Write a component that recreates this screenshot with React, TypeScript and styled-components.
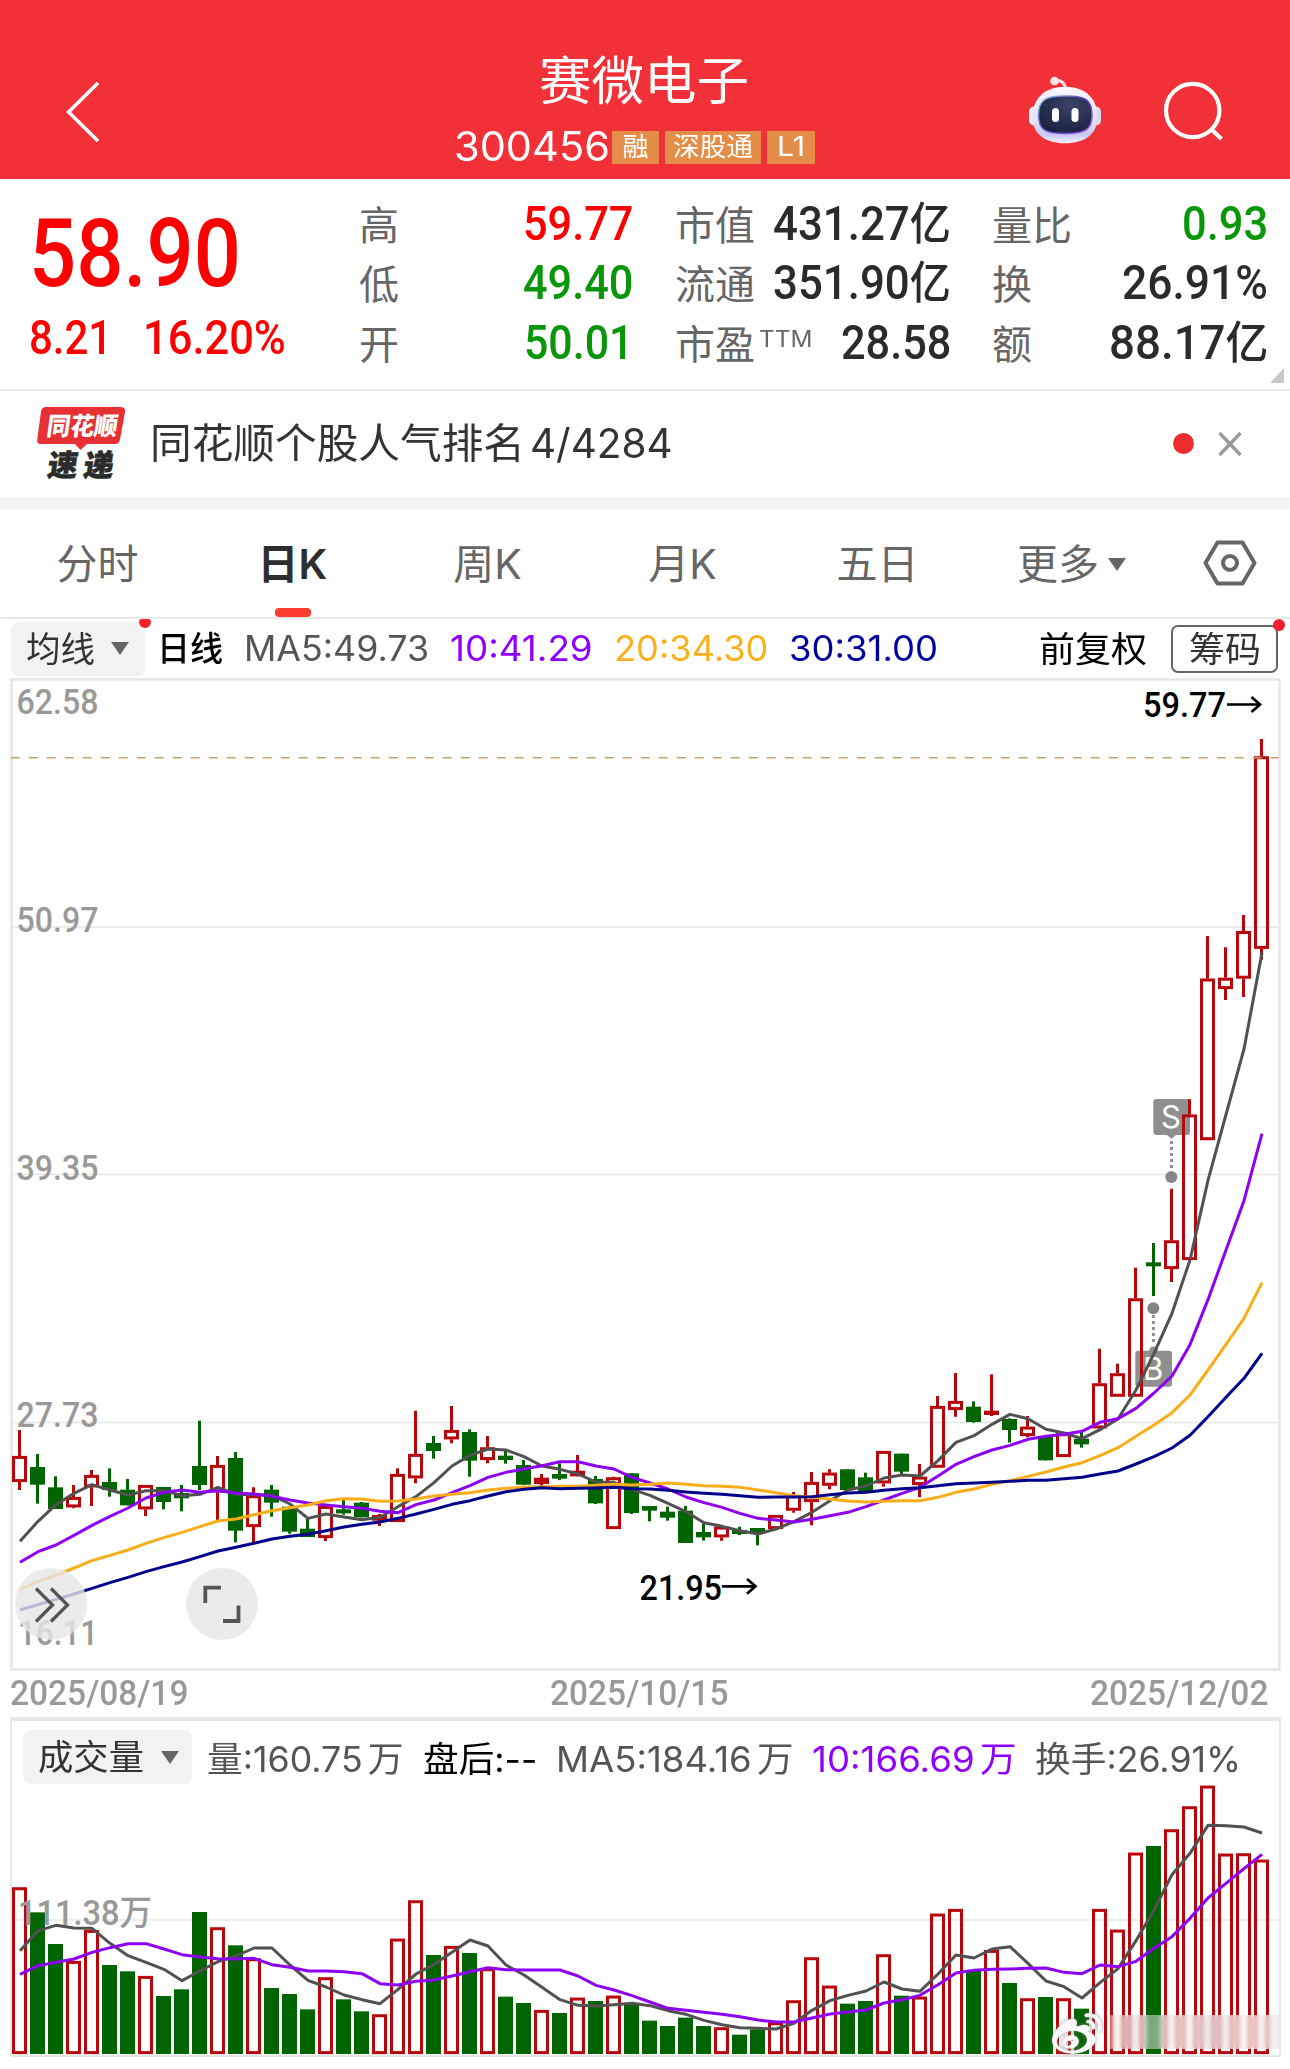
import React, { useLayoutEffect, useRef, useState } from "react";
import styled, { createGlobalStyle } from "styled-components";
import { FaWeibo } from "react-icons/fa";

const UI = `Inter, "Noto Sans CJK SC", sans-serif`;
const DIN = `Roboto, "Noto Sans CJK SC", sans-serif`;

const Global = createGlobalStyle`
  * { box-sizing: border-box; }
  body { margin: 0; background: #fff; font-family: ${UI}; }
`;

/* ---------- text that fills a given width ---------- */

const FitBox = styled.span<{ $w: number; $din?: boolean; $size: number; $color?: string; $weight?: number; $dy?: number }>`
  display: block;
  flex: none;
  width: ${(p) => p.$w}px;
  font-family: ${(p) => (p.$din ? DIN : UI)};
  font-size: ${(p) => p.$size}px;
  font-weight: ${(p) => p.$weight ?? 400};
  color: ${(p) => p.$color ?? "inherit"};
  line-height: 1.2;
  margin-top: ${(p) => p.$dy ?? 0}px;
  white-space: nowrap;
`;
const FitInner = styled.span`
  display: inline-block;
  transform-origin: 0 50%;
`;

type FitProps = {
  w: number;
  size: number;
  din?: boolean;
  color?: string;
  weight?: number;
  dy?: number;
  children: React.ReactNode;
};

function Fit({ w, size, din, color, weight, dy, children }: FitProps) {
  const ref = useRef<HTMLSpanElement>(null);
  const [scale, setScale] = useState(1);
  useLayoutEffect(() => {
    if (ref.current) setScale(w / ref.current.offsetWidth);
  }, [w, size, children]);
  return (
    <FitBox $w={w} $size={size} $din={din} $color={color} $weight={weight} $dy={dy}>
      <FitInner ref={ref} style={{ transform: `scaleX(${scale})` }}>
        {children}
      </FitInner>
    </FitBox>
  );
}

/* ---------- page ---------- */

const Page = styled.main`
  width: 1290px;
  height: 2069px;
  overflow: hidden;
  display: flex;
  flex-direction: column;
  background: #fff;
`;

/* ---------- header ---------- */

const Header = styled.header`
  flex: none;
  height: 179px;
  display: grid;
  grid-template-columns: 455px 1fr 455px;
  background: #f23037;
  color: #fff;
`;
const BackSlot = styled.div`
  padding: 80px 0 0 62px;
`;
const Titles = styled.div`
  display: flex;
  flex-direction: column;
  padding-top: 51px;
`;
const TitleRow = styled.div`
  display: flex;
  justify-content: center;
  height: 62px;
  align-items: center;
  margin-right: 3px;
`;
const CodeRow = styled.div`
  display: flex;
  align-items: center;
  height: 36px;
  margin-top: 16px;
  margin-left: -1px;
`;
const Tag = styled.span<{ $w: number }>`
  flex: none;
  width: ${(p) => p.$w}px;
  height: 33px;
  margin-left: 6px;
  background: #e48d48;
  display: flex;
  align-items: center;
  justify-content: center;
  &:first-of-type { margin-left: 0; }
`;
const TagRow = styled.div`
  display: flex;
  margin-left: 2px;
`;
const HeaderActions = styled.div`
  display: flex;
  padding: 72px 0 0 190px;
  gap: 56px;
`;

function Robot() {
  return (
    <svg width="80" height="76" viewBox="1025 72 80 76">
      <defs>
        <linearGradient id="shell" x1="0" y1="0" x2="0" y2="1">
          <stop offset="0" stopColor="#fdf8fb" />
          <stop offset="0.6" stopColor="#e4e0f4" />
          <stop offset="0.85" stopColor="#c9c8f2" />
          <stop offset="1" stopColor="#f4f2fb" />
        </linearGradient>
        <linearGradient id="rim" x1="0" y1="0" x2="1" y2="1">
          <stop offset="0" stopColor="#8fc5e8" />
          <stop offset="0.5" stopColor="#5a3fc0" />
          <stop offset="1" stopColor="#a25bf0" />
        </linearGradient>
        <radialGradient id="visor" cx="0.6" cy="0.25" r="0.8">
          <stop offset="0" stopColor="#3b4468" />
          <stop offset="1" stopColor="#18203f" />
        </radialGradient>
      </defs>
      <path d="M1056 80.500Q1064.500 80 1065.500 89" fill="none" stroke="#f8dfe4" strokeWidth="3" />
      <circle cx="1054.500" cy="81" r="4.300" fill="#fbe6ea" />
      <rect x="1029" y="106.500" width="12" height="19" rx="5" fill="#efeaf6" />
      <rect x="1089" y="106.500" width="12" height="19" rx="5" fill="#dcd6f2" />
      <path d="M1065 86.700C1086 86.700 1097.500 99 1097.500 117C1097.500 134 1085 143.300 1065 143.300C1045 143.300 1032.500 134 1032.500 117C1032.500 99 1044 86.700 1065 86.700Z" fill="url(#shell)" />
      <path d="M1065.500 96C1084 96 1092 98.500 1092 115C1092 130 1085 133.500 1065.500 133.500C1046 133.500 1038.500 130 1038.500 115C1038.500 98.500 1047 96 1065.500 96Z" fill="url(#visor)" stroke="url(#rim)" strokeWidth="1.500" />
      <rect x="1052" y="108" width="7" height="14" rx="3.500" fill="#fff" />
      <rect x="1071.500" y="108" width="7" height="14" rx="3.500" fill="#fff" />
    </svg>
  );
}

/* ---------- quote ---------- */

const Quote = styled.section`
  position: relative;
  flex: none;
  height: 212px;
  padding: 15px 0 0 29px;
  display: grid;
  grid-template-columns: 330px 275px 277px 277px;
  column-gap: 0;
  border-bottom: 2px solid #ebebeb;
`;
const PriceBlock = styled.div`
  display: flex;
  flex-direction: column;
  color: #ff0000;
`;
const PriceRow = styled.div`
  height: 118px;
  padding-top: 2px;
  display: flex;
  align-items: center;
`;
const ChangeRow = styled.div`
  height: 52px;
  display: flex;
  align-items: center;
  gap: 31px;
`;
const Column = styled.div<{ $gap?: number }>`
  margin-left: ${(p) => p.$gap ?? 0}px;
  width: ${(p) => (p.$gap ? 276 : 274)}px;
`;
const StatRow = styled.div`
  height: 59.500px;
  display: flex;
  align-items: center;
  justify-content: space-between;
`;
const Label = styled.span`
  display: flex;
  color: #666;
  font-size: 40px;
  line-height: 50px;
  padding-top: 4px;
`;
const Yi = styled.span`
  font-size: 45px;
`;
const SupSlot = styled.span`
  display: flex;
  padding: 5px 0 0 4px;
`;
const Corner = styled.i`
  position: absolute;
  right: 6px;
  bottom: 6px;
  border-left: 14px solid transparent;
  border-bottom: 15px solid #c8c8c8;
`;

type Stat = { label: string; sup?: string; value: string; yi?: boolean; w: number; color: string };
const RED = "#ff0000";
const GREEN = "#0a960a";
const INK = "#2b2b2b";
const stats: Stat[][] = [
  [
    { label: "高", value: "59.77", w: 110, color: RED },
    { label: "低", value: "49.40", w: 110, color: GREEN },
    { label: "开", value: "50.01", w: 109, color: GREEN },
  ],
  [
    { label: "市值", value: "431.27", yi: true, w: 178, color: INK },
    { label: "流通", value: "351.90", yi: true, w: 178, color: INK },
    { label: "市盈", sup: "TTM", value: "28.58", w: 110, color: INK },
  ],
  [
    { label: "量比", value: "0.93", w: 86, color: GREEN },
    { label: "换", value: "26.91%", w: 146, color: INK },
    { label: "额", value: "88.17", yi: true, w: 159, color: INK },
  ],
];

/* ---------- news ---------- */

const News = styled.section`
  flex: none;
  height: 118px;
  border-bottom: 12px solid #f4f4f4;
  display: flex;
  align-items: center;
`;
const NewsText = styled.div`
  display: flex;
  gap: 5px;
  margin-left: 24px;
  color: #333;
`;
const Dot = styled.i`
  width: 21px;
  height: 21px;
  border-radius: 50%;
  background: #eb2d2d;
  margin: 0 24px 1px auto;
`;
const CloseSlot = styled.span`
  display: flex;
  margin: 0 48px 1px 0;
`;

/* ---------- tabs ---------- */

const Tabs = styled.nav`
  flex: none;
  height: 110px;
  display: flex;
  border-bottom: 2px solid #e8e8e8;
`;
const Tab = styled.div<{ $active?: boolean }>`
  width: 195px;
  display: flex;
  flex-direction: column;
  align-items: center;
  font-size: 41px;
  line-height: 50px;
  padding-top: 30px;
  color: ${(p) => (p.$active ? "#2e2e2e" : "#666")};
  font-weight: ${(p) => (p.$active ? 600 : 400)};
`;
const TabText = styled.span`
  display: flex;
  align-items: center;
  gap: 9px;
  margin-right: 2px;
`;
const Underline = styled.i`
  width: 36px;
  height: 9px;
  border-radius: 4px;
  background: #fb3a30;
  margin-top: 19px;
`;
const Gear = styled.div`
  width: 120px;
  display: flex;
  justify-content: center;
  padding-top: 29px;
`;
const Triangle = styled.i<{ $w: number }>`
  width: 0;
  border: ${(p) => p.$w / 2}px solid transparent;
  border-top: 13px solid #666;
  border-bottom: 0;
`;

/* ---------- indicator rows ---------- */

const MaRow = styled.div`
  flex: none;
  height: 59px;
  display: flex;
  align-items: center;
  padding: 0 12px 0 11px;
`;
const Chip = styled.div<{ $w: number; $end?: number }>`
  position: relative;
  flex: none;
  width: ${(p) => p.$w}px;
  height: 54px;
  border-radius: 8px;
  background: #f2f2f2;
  color: #333;
  display: flex;
  align-items: center;
  justify-content: space-between;
  padding: 0 ${(p) => p.$end ?? 16}px 0 15px;
`;
const Badge = styled.i<{ $top: number; $right: number; $cut?: boolean }>`
  position: absolute;
  top: ${(p) => p.$top}px;
  right: ${(p) => p.$right}px;
  width: 12px;
  height: ${(p) => (p.$cut ? 9 : 12)}px;
  border-radius: ${(p) => (p.$cut ? "3px 3px 6px 6px" : "6px")};
  background: #f5202f;
`;
const MaList = styled.div`
  display: flex;
  align-items: center;
  gap: 21px;
  margin-left: 12px;
`;
const Right = styled.div`
  display: flex;
  align-items: center;
  margin-left: auto;
  gap: 24px;
`;
const ChipsButton = styled.div`
  position: relative;
  width: 107px;
  height: 48px;
  border: 2px solid #666;
  border-radius: 7px;
  display: flex;
  align-items: center;
  justify-content: center;
  color: #333;
`;

/* ---------- charts ---------- */

const PriceArea = styled.section`
  position: relative;
  flex: none;
  height: 993px;
`;
const Plot = styled.svg`
  display: block;
  overflow: visible;
`;
const Floating = styled.button<{ $x: number }>`
  position: absolute;
  left: ${(p) => p.$x}px;
  top: 890px;
  width: 72px;
  height: 72px;
  padding: 0;
  border: 0;
  border-radius: 50%;
  background: rgba(230, 230, 230, 0.8);
`;
const Dates = styled.div`
  flex: none;
  height: 46px;
  padding: 0 22px 0 10px;
  display: flex;
  align-items: center;
  justify-content: space-between;
`;
const VolumePanel = styled.section`
  position: relative;
  flex: none;
  height: 340px;
  margin: 0 9px 0 10px;
  border: 2px solid #e8e8e8;
  border-top-width: 4px;
`;
const VolumeHeader = styled.div`
  height: 63px;
  padding: 9px 0 0 11px;
  display: flex;
  align-items: center;
`;
const VolumeList = styled.div`
  display: flex;
  align-items: center;
  gap: 19px;
  margin-left: 15px;
  padding-top: 3px;
`;
const Unit = styled.span`
  margin-left: 5px;
`;
const Watermark = styled.div`
  position: absolute;
  right: -2px;
  bottom: -3px;
  width: 229px;
  height: 46px;
  color: #fafafa;
  display: flex;
  align-items: center;
  gap: 8px;
  svg { flex: none; filter: drop-shadow(0 0 2px rgba(120, 120, 120, 0.75)); }
`;
const Smudge = styled.div`
  flex: 1;
  height: 34px;
  margin-bottom: 6px;
  background: linear-gradient(90deg, rgba(250,250,250,.3), rgba(225,222,222,.5) 12%, rgba(240,235,235,.6) 45%, rgba(225,220,220,.65) 60%, rgba(250,240,240,.6) 80%, rgba(228,228,228,.6));
  backdrop-filter: blur(2px);
`;

const STEP = 18;
const X0 = 19.3;
const px = (i: number) => X0 + STEP * i;
/* values are thirds of a pixel below a block's top edge */
const from = (top: number, v: number[]) => v.map((n) => top + n / 3);

type Candle = [string, number, number, number, number];
const block = (top: number, rows: Candle[]): Candle[] =>
  rows.map(([c, a, b, d, e]) => [c, top + a / 3, top + b / 3, top + d / 3, top + e / 3]);

const candles: Candle[] = [
  ...block(1400, [
    ["R", 90, 168, 246, 270], ["G", 162, 201, 254, 311], ["G", 229, 262, 327, 327], ["R", 255, 291, 322, 325],
    ["R", 210, 225, 262, 318], ["G", 205, 246, 270, 290], ["G", 237, 269, 316, 316], ["R", 255, 255, 328, 348],
    ["G", 261, 261, 306, 328], ["G", 255, 279, 295, 334], ["G", 62, 198, 255, 270], ["R", 168, 195, 277, 365],
    ["G", 156, 174, 392, 427], ["R", 262, 286, 381, 430], ["G", 255, 269, 308, 350], ["G", 320, 320, 395, 401],
    ["G", 355, 386, 411, 411], ["R", 318, 318, 414, 423], ["G", 300, 328, 340, 344], ["G", 306, 308, 352, 352],
    ["R", 342, 345, 362, 378], ["R", 205, 222, 366, 366], ["R", 32, 162, 235, 250],
  ]),
  ...block(1360, [
    ["G", 228, 249, 273, 296], ["R", 138, 210, 238, 250], ["G", 208, 216, 302, 350], ["R", 228, 262, 300, 310],
    ["G", 270, 287, 300, 311], ["G", 300, 315, 374, 374], ["R", 342, 353, 372, 378], ["G", 310, 342, 356, 360],
    ["R", 285, 332, 349, 349], ["G", 348, 357, 430, 432], ["R", 350, 352, 507, 507], ["G", 340, 340, 459, 462],
    ["G", 438, 438, 452, 484], ["G", 440, 455, 473, 482], ["G", 438, 452, 549, 549], ["G", 490, 516, 532, 542],
    ["R", 495, 500, 532, 542], ["G", 500, 510, 522, 525], ["G", 504, 504, 518, 556], ["R", 465, 465, 507, 507],
    ["R", 396, 405, 452, 458], ["R", 336, 366, 426, 496], ["R", 328, 338, 377, 388], ["G", 328, 328, 390, 390],
  ]),
  ...block(1200, [
    ["G", 818, 832, 875, 875], ["R", 753, 753, 850, 860], ["G", 761, 761, 815, 822], ["R", 792, 830, 855, 892],
    ["R", 588, 618, 803, 803], ["R", 519, 603, 630, 650], ["G", 604, 620, 666, 668], ["R", 523, 632, 645, 648],
    ["G", 655, 657, 690, 728], ["R", 648, 680, 708, 712], ["G", 710, 710, 781, 781], ["R", 700, 700, 771, 771],
    ["G", 695, 716, 733, 743], ["R", 446, 550, 685, 688], ["R", 491, 520, 590, 590], ["R", 203, 295, 590, 590],
    ["G", 129, 187, 199, 288], ["R", -34, 121, 207, 246],
  ]),
  ["R", 1099.2, 1114.5, 1260, 1260],
  ["R", 936.1, 978.6, 1140.1, 1140.1],
  ["R", 947.2, 977.8, 989, 1000],
  ["R", 915, 931.1, 978.6, 997],
  ["R", 739, 756.3, 948.8, 959.5],
];

const ma5 = [
  ...from(1400, [424, 364, 314, 280, 254, 270, 285, 272, 272, 287, 283, 262, 283, 284, 286, 312, 355, 342, 351, 359, 352, 320, 290]),
  ...from(1360, [368, 318, 286, 267, 270, 290, 318, 328, 342, 366, 367, 388, 406, 430, 455, 488, 499, 512, 522, 507, 485, 457, 422, 390]),
  ...from(1200, [858, 834, 825, 828, 782, 727, 707, 673, 643, 656, 688, 699, 716, 689, 657, 570, 460, 340, 180]),
  1180.3, 1114.5, 1049, 952.6,
];
const ma10 = [
  ...from(1400, [487, 455, 435, 406, 376, 349, 324, 294, 277, 270, 277, 272, 279, 282, 289, 300, 309, 315, 320, 325, 334, 338, 314]),
  ...from(1360, [420, 398, 377, 352, 337, 327, 317, 305, 305, 318, 327, 352, 369, 387, 411, 428, 442, 460, 475, 480, 486, 478, 467, 457]),
  ...from(1200, [920, 900, 880, 862, 828, 793, 770, 750, 736, 718, 709, 703, 694, 667, 656, 625, 579, 528, 434, 299, 150, 2, -199]),
];
const ma20 = [
  ...from(1400, [568, 545, 526, 504, 482, 466, 450, 430, 413, 397, 380, 363, 357, 344, 332, 323, 315, 302, 296, 297, 304, 303, 297]),
  ...from(1360, [408, 403, 398, 390, 385, 381, 380, 379, 379, 376, 373, 375, 373, 369, 373, 377, 379, 382, 390, 398, 407, 411, 418, 423]),
  ...from(1200, [906, 904, 902, 902, 892, 877, 867, 853, 842, 829, 816, 801, 788, 767, 743, 709, 675, 638, 585, 510, 433, 355, 248]),
];
const ma30 = [
  ...from(1400, [630, 614, 598, 582, 565, 548, 532, 515, 500, 486, 470, 453, 442, 430, 417, 409, 403, 392, 381, 373, 366, 355, 342]),
  ...from(1360, [448, 433, 422, 408, 395, 388, 383, 386, 385, 384, 382, 386, 387, 391, 396, 400, 403, 407, 412, 411, 411, 410, 404, 399]),
  ...from(1200, [877, 871, 866, 863, 857, 851, 849, 847, 844, 841, 841, 836, 832, 822, 813, 792, 770, 744, 706, 650, 592, 535, 460]),
];
const volumes = from(1700, [
  562, 637, 732, 783, 690, 795, 814, 828, 888, 868, 636, 682, 736, 775, 864, 882, 928, 832, 898, 934, 943, 716, 601, 765, 738,
  759, 805, 890, 909, 930, 939, 893, 903, 887, 910, 962, 978, 953, 978, 982, 1004, 988, 967, 901, 772, 857, 911, 903, 763, 887,
  890, 641, 627, 812, 750, 849, 895, 891, 895, 926, 627, 689, 458, 438, 388, 319, 257, 461, 460, 479,
]);
const vol5 = from(1700, [
  752, 692, 676, 684, 685, 730, 767, 787, 808, 842, 813, 785, 768, 744, 744, 795, 841, 861, 885, 899, 911, 868, 822, 793, 757,
  720, 738, 795, 825, 862, 899, 916, 918, 914, 910, 917, 932, 943, 961, 974, 983, 985, 987, 970, 931, 902, 886, 873, 846, 867,
  874, 822, 765, 774, 747, 740, 790, 843, 860, 894, 848, 806, 722, 630, 524, 460, 376, 377, 381, 399,
]);
const vol10 = from(1700, [
  823, 797, 787, 777, 757, 743, 731, 731, 747, 764, 771, 776, 777, 775, 794, 802, 813, 813, 815, 821, 851, 855, 844, 840, 828,
  815, 803, 809, 810, 810, 810, 828, 856, 870, 887, 906, 925, 931, 937, 943, 950, 960, 966, 966, 954, 942, 936, 930, 909, 899,
  886, 854, 819, 811, 808, 807, 805, 804, 817, 821, 795, 800, 784, 745, 710, 655, 594, 550, 506, 463,
]);

const UP = "#b9060b";
const DOWN = "#006400";

function Line({ data, color }: { data: number[]; color: string }) {
  return (
    <polyline
      points={data.map((y, i) => `${px(i) + 0.7},${y}`).join(" ")}
      fill="none"
      stroke={color}
      strokeWidth={3}
      strokeLinejoin="round"
    />
  );
}

function CandleMark({ c, i }: { c: Candle; i: number }) {
  const [kind, high, top, bottom, low] = c;
  const x = px(i);
  const color = kind === "R" ? UP : DOWN;
  const h = bottom - top;
  if (kind === "R" && h > 7) {
    return (
      <g stroke={color} strokeWidth={3} fill="none">
        <path d={`M${x + 0.2} ${high}V${top}M${x + 0.2} ${bottom}V${low}`} />
        <rect x={x - 5.8} y={top + 1.4} width={12} height={h - 2.8} />
      </g>
    );
  }
  return (
    <g>
      <path d={`M${x + 0.2} ${high}V${low}`} stroke={color} strokeWidth={3} />
      <rect x={x - 7.3} y={top} width={15} height={h} fill={color} />
    </g>
  );
}

const axis = [
  { t: "62.58", x: 16.5, y: 714, w: 82 },
  { t: "50.97", x: 16.5, y: 931.5, w: 82 },
  { t: "39.35", x: 16.5, y: 1179.5, w: 82 },
  { t: "27.73", x: 16.5, y: 1427, w: 82 },
  { t: "16.11", x: 18, y: 1645, w: 80 },
];

function PriceChart() {
  return (
    <PriceArea>
      <Plot width="1290" height="993" viewBox="0 678 1290 993">
        <g stroke="#e6e6e6" fill="none">
          <rect x="11.500" y="679.500" width="1268" height="990" strokeWidth="2.500" />
          <path d="M12 927H1279M12 1174.500H1279M12 1422.500H1279" strokeWidth="1.500" />
        </g>
        <g fill="#999" fontFamily={DIN} fontSize="35" fontWeight="500">
          {axis.map((a) => (
            <text key={a.t} x={a.x} y={a.y} textLength={a.w} lengthAdjust="spacingAndGlyphs">{a.t}</text>
          ))}
        </g>
        <g>
          <rect x="1153.300" y="1099" width="36.700" height="36" rx="3" fill="#8f8f8f" />
          <path d="M1167 1135h9l-4.500 4z" fill="#8f8f8f" />
          <path d="M1171.500 1141V1169" stroke="#8f8f8f" strokeWidth="3" strokeDasharray="3 3" />
          <circle cx="1171.300" cy="1177" r="6" fill="#858585" />
          <text x="1161" y="1128" fontFamily={UI} fontSize="31" fill="#fff">S</text>
          <rect x="1135.300" y="1350.700" width="36.700" height="36" rx="3" fill="#8f8f8f" />
          <path d="M1149 1351a4.500 4.500 0 0 1 9 0z" fill="#8f8f8f" />
          <path d="M1153.400 1315V1344" stroke="#8f8f8f" strokeWidth="3" strokeDasharray="3 3" />
          <circle cx="1153.300" cy="1308.300" r="6" fill="#858585" />
          <text x="1143" y="1380" fontFamily={UI} fontSize="31" fill="#fff">B</text>
        </g>
        {candles.map((c, i) => <CandleMark key={i} c={c} i={i} />)}
        <path d="M10.700 757.800H1279" stroke="#cda071" strokeWidth="1.500" strokeDasharray="9 9" />
        <Line data={ma5} color="#515151" />
        <Line data={ma10} color="#8e00f2" />
        <Line data={ma20} color="#f9ae19" />
        <Line data={ma30} color="#00008b" />
        <g fontFamily={DIN} fontSize="35.500" fontWeight="500" fill="#000">
          <text x="1143" y="717" textLength="83" lengthAdjust="spacingAndGlyphs">59.77</text>
          <text x="639.500" y="1599.500" textLength="82.500" lengthAdjust="spacingAndGlyphs">21.95</text>
        </g>
        <g fill="none" stroke="#000" strokeWidth="2.700">
          <path d="M1227 704.500H1260M1251.500 697L1260 704.500L1251.500 712" />
          <path d="M722 1586.300H755.500M747 1579L755.500 1586.300L747 1593.800" />
        </g>
      </Plot>
      <Floating $x={15} aria-label="展开">
        <svg width="72" height="72" fill="none" stroke="#555" strokeWidth="3.300">
          <path d="M21 20.500L37.500 37L21 53.500M36 20.500L52.500 37L36 53.500" />
        </svg>
      </Floating>
      <Floating $x={186} aria-label="全屏">
        <svg width="72" height="72" fill="none" stroke="#555" strokeWidth="3.800">
          <path d="M19.300 35V19.700H35M37 53H52.500V37.500" />
        </svg>
      </Floating>
    </PriceArea>
  );
}

function VolumeChart() {
  return (
    <Plot width="1267" height="271" viewBox="12 1784 1267 271">
      <path d="M12 1920H1279" stroke="#e8e8e8" strokeWidth="1.500" />
      {volumes.map((y, i) =>
        candles[i][0] === "R" ? (
          <rect key={i} x={px(i) - 5.8} y={y + 1.4} width={12} height={2054 - y - 2.8} fill="none" stroke={UP} strokeWidth={3} />
        ) : (
          <rect key={i} x={px(i) - 7.3} y={y} width={15} height={2054 - y} fill={DOWN} />
        )
      )}
      <text x="18" y="1925" fontFamily={DIN} fontSize="35" fontWeight="500" fill="#999" textLength="134" lengthAdjust="spacingAndGlyphs">111.38万</text>
      <Line data={vol5} color="#515151" />
      <Line data={vol10} color="#8e00f2" />
    </Plot>
  );
}

export default function App() {
  return (
    <>
      <Global />
      <Page>
        <Header>
          <BackSlot>
            <svg width="42" height="64" fill="none" stroke="#fff" strokeWidth="3.500">
              <path d="M36 3L6.500 32L36 61" />
            </svg>
          </BackSlot>
          <Titles>
            <TitleRow><Fit w={210} size={52}>赛微电子</Fit></TitleRow>
            <CodeRow>
              <Fit w={156} size={41}>300456</Fit>
              <TagRow>
                <Tag $w={47}><Fit w={26} size={26}>融</Fit></Tag>
                <Tag $w={96}><Fit w={80} size={26}>深股通</Fit></Tag>
                <Tag $w={48}><Fit w={28} size={27}>L1</Fit></Tag>
              </TagRow>
            </CodeRow>
          </Titles>
          <HeaderActions>
            <Robot />
            <svg width="70" height="76" viewBox="1161 72 70 76" fill="none" stroke="#fff" strokeWidth="4.200">
              <circle cx="1192.700" cy="110.500" r="26.700" />
              <path d="M1211 129L1221.500 139" />
            </svg>
          </HeaderActions>
        </Header>

        <Quote>
          <PriceBlock>
            <PriceRow><Fit din w={212} size={94} weight={500}>58.90</Fit></PriceRow>
            <ChangeRow>
              <Fit din w={83} size={48} weight={500}>8.21</Fit>
              <Fit din w={143} size={48} weight={500}>16.20%</Fit>
            </ChangeRow>
          </PriceBlock>
          {stats.map((col, c) => (
            <Column key={c} $gap={c === 0 ? 0 : c === 1 ? 41 : 81}>
              {col.map((s) => (
                <StatRow key={s.label}>
                  <Label>
                    {s.label}
                    {s.sup && <SupSlot><Fit w={53} size={22.5}>{s.sup}</Fit></SupSlot>}
                  </Label>
                  <Fit din w={s.w} size={48} weight={500} color={s.color}>
                    {s.value}
                    {s.yi && <Yi>亿</Yi>}
                  </Fit>
                </StatRow>
              ))}
            </Column>
          ))}
          <Corner />
        </Quote>

        <News>
          <svg width="126" height="84" viewBox="0 402 126 84">
            <path d="M46 407H120Q126 407 125 412L120 439.500Q119 444 115 444H87L80.500 450L75 444H41Q36.500 444 37.300 439.500L41 411.500Q41.700 407 46 407Z" fill="#e73034" />
            <g fontFamily={UI} fontWeight="900" transform="skewX(-8)">
              <text x="107" y="435.500" fontSize="25" fill="#fff" textLength="71" lengthAdjust="spacingAndGlyphs">同花顺</text>
              <text x="113.500" y="476.500" fontSize="30" fill="#2b2b2b" stroke="#2b2b2b" strokeWidth="0.600" textLength="66" lengthAdjust="spacing">速递</text>
            </g>
          </svg>
          <NewsText>
            <Fit w={375} size={41}>同花顺个股人气排名</Fit>
            <Fit w={143} size={41}>4/4284</Fit>
          </NewsText>
          <Dot />
          <CloseSlot>
            <svg width="24" height="26" stroke="#999" strokeWidth="3.300"><path d="M1.500 2L22.500 24M22.500 2L1.500 24" /></svg>
          </CloseSlot>
        </News>

        <Tabs>
          <Tab>分时</Tab>
          <Tab $active>日K<Underline /></Tab>
          <Tab>周K</Tab>
          <Tab>月K</Tab>
          <Tab>五日</Tab>
          <Tab><TabText>更多<Triangle $w={18} /></TabText></Tab>
          <Gear>
            <svg width="56" height="50" fill="none" stroke="#666" strokeWidth="4">
              <path d="M15.500 4.500H40.500L52.500 25L40.500 45.500H15.500L3.500 25Z" strokeLinejoin="round" />
              <circle cx="28" cy="25" r="7" />
            </svg>
          </Gear>
        </Tabs>

        <MaRow>
          <Chip $w={134}>
            <Fit w={69} size={35}>均线</Fit>
            <Triangle $w={18} />
            <Badge $top={-3} $right={-6} $cut />
          </Chip>
          <MaList>
            <Fit w={66} size={34} weight={500} color="#000" dy={2}>日线</Fit>
            <Fit w={185} size={35} color="#555">MA5:49.73</Fit>
            <Fit w={143} size={35} color="#9000ff">10:41.29</Fit>
            <Fit w={154} size={35} color="#f9b01e">20:34.30</Fit>
            <Fit w={149} size={35} color="#0000a0">30:31.00</Fit>
          </MaList>
          <Right>
            <Fit w={108} size={35} color="#000">前复权</Fit>
            <ChipsButton>
              <Fit w={72} size={35}>筹码</Fit>
              <Badge $top={-8} $right={-9} />
            </ChipsButton>
          </Right>
        </MaRow>

        <PriceChart />

        <Dates>
          <Fit din w={178} size={35} weight={500} color="#999">2025/08/19</Fit>
          <Fit din w={178} size={35} weight={500} color="#999">2025/10/15</Fit>
          <Fit din w={178} size={35} weight={500} color="#999">2025/12/02</Fit>
        </Dates>

        <VolumePanel>
          <VolumeHeader>
            <Chip $w={169} $end={13}>
              <Fit w={106} size={35}>成交量</Fit>
              <Triangle $w={18} />
            </Chip>
            <VolumeList>
              <Fit w={197} size={35} color="#555">量:160.75<Unit>万</Unit></Fit>
              <Fit w={114} size={35} color="#000">盘后:--</Fit>
              <Fit w={237} size={35} color="#555">MA5:184.16<Unit>万</Unit></Fit>
              <Fit w={204} size={35} color="#9000ff">10:166.69<Unit>万</Unit></Fit>
              <Fit w={206} size={35} color="#555">换手:26.91%</Fit>
            </VolumeList>
          </VolumeHeader>
          <VolumeChart />
          <Watermark>
            <FaWeibo size={50} />
            <Smudge />
          </Watermark>
        </VolumePanel>
      </Page>
    </>
  );
}
